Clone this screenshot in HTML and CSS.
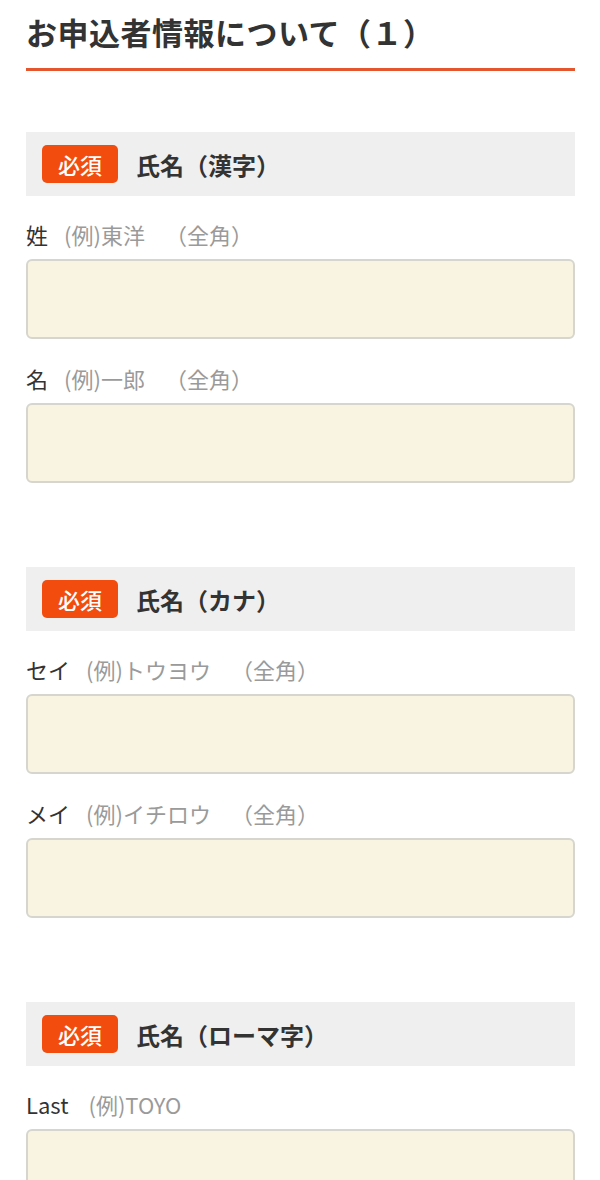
FILE: index.html
```html
<!DOCTYPE html>
<html lang="ja">
<head>
<meta charset="utf-8">
<title>お申込者情報について（1）</title>
<link rel="stylesheet" href="styles.css">
</head>
<body>
<main class="page">
  <h1 class="page-title">お申込者情報について（１）</h1>

  <section class="group">
    <div class="group-head"><span class="badge">必須</span><span class="group-title">氏名（漢字）</span></div>
    <div class="field">
      <label class="label">姓<span class="hint">(例)東洋</span><span class="note">（全角）</span></label>
      <input class="input" type="text">
    </div>
    <div class="field">
      <label class="label">名<span class="hint">(例)一郎</span><span class="note">（全角）</span></label>
      <input class="input" type="text">
    </div>
  </section>

  <section class="group">
    <div class="group-head"><span class="badge">必須</span><span class="group-title">氏名（カナ）</span></div>
    <div class="field">
      <label class="label">セイ<span class="hint">(例)トウヨウ</span><span class="note">（全角）</span></label>
      <input class="input" type="text">
    </div>
    <div class="field">
      <label class="label">メイ<span class="hint">(例)イチロウ</span><span class="note">（全角）</span></label>
      <input class="input" type="text">
    </div>
  </section>

  <section class="group">
    <div class="group-head"><span class="badge">必須</span><span class="group-title">氏名（ローマ字）</span></div>
    <div class="field">
      <label class="label">Last<span class="hint hint-latin">(例)TOYO</span></label>
      <input class="input" type="text">
    </div>
  </section>
</main>
</body>
</html>
```

FILE: styles.css
```css
html, body {
  margin: 0;
  padding: 0;
  background: #ffffff;
}
body {
  font-family: "Noto Sans CJK JP", "Noto Sans", sans-serif;
  color: #333333;
}
.page {
  padding: 0 25px 0 26px;
}
.page-title {
  margin: 0;
  padding: 12px 0 16px;
  font-size: 31px;
  line-height: 40px;
  font-weight: 700;
  letter-spacing: 0.5px;
  color: #333333;
  border-bottom: 3px solid #e4572e;
}
.group {
  margin-top: 61px;
}
.group + .group {
  margin-top: 84px;
}
.group-head {
  display: flex;
  align-items: center;
  height: 64px;
  padding-left: 16px;
  background: #efefef;
}
.badge {
  display: flex;
  align-items: center;
  justify-content: center;
  width: 76px;
  height: 38px;
  border-radius: 5px;
  background: #f24c0e;
  color: #ffffff;
  font-size: 22px;
  font-weight: 500;
}
.group-title {
  margin-left: 18px;
  font-size: 24px;
  font-weight: 700;
  color: #333333;
}
.field {
  margin-top: 24px;
}
.field + .field {
  margin-top: 25px;
}
.label {
  display: block;
  font-size: 22px;
  line-height: 28px;
  color: #333333;
}
.hint {
  margin-left: 16px;
  color: #9a9a9a;
}
.hint-latin {
  margin-left: 20px;
}
.note {
  margin-left: 20px;
  color: #9a9a9a;
}
.input {
  display: block;
  box-sizing: border-box;
  width: 100%;
  height: 80px;
  margin: 11px 0 0;
  border: 2px solid #d6d6cf;
  border-radius: 6px;
  background: #f9f4e2;
  font-size: 20px;
  padding: 0 12px;
}
```
